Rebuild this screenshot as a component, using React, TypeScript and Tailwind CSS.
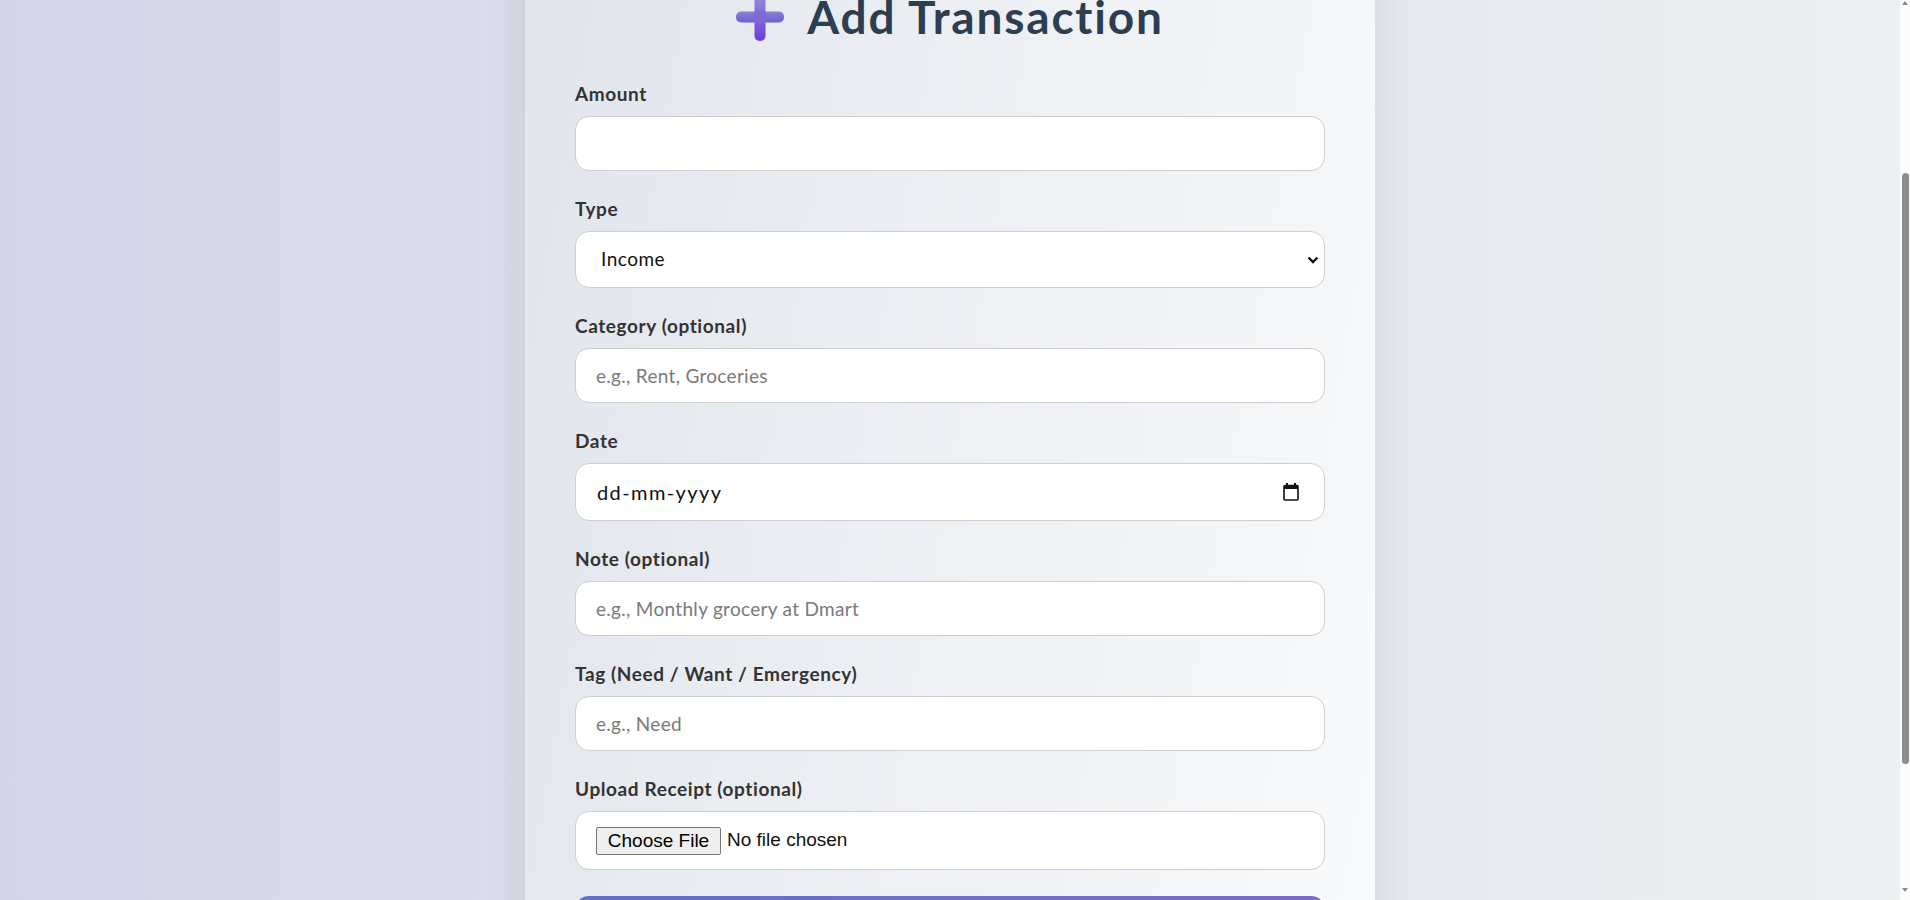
import { useLayoutEffect } from "react";

const font = { fontFamily: "Lato, 'Open Sans', sans-serif" };

function PlusIcon() {
  return (
    <svg width="48" height="48" viewBox="0 0 48 48" className="shrink-0">
      <defs>
        <linearGradient id="plusv" x1="0" y1="0" x2="0" y2="1">
          <stop offset="0" stopColor="#9a8fd9" />
          <stop offset="1" stopColor="#6a3fdc" />
        </linearGradient>
        <linearGradient id="plush" x1="0" y1="0" x2="0" y2="1">
          <stop offset="0" stopColor="#8c80d6" />
          <stop offset="1" stopColor="#6f5ccf" />
        </linearGradient>
      </defs>
      <rect x="18.5" y="0" width="11" height="48" rx="5" fill="url(#plusv)" />
      <rect x="0" y="18.5" width="48" height="11" rx="5" fill="url(#plush)" />
      <rect x="18.5" y="18.5" width="11" height="11" fill="#7a6bd4" />
    </svg>
  );
}

function Label({ children }: { children: React.ReactNode }) {
  return (
    <label className="block mb-[9px] text-[19px] leading-[27px] font-bold tracking-[0.6px] text-[#333]">
      {children}
    </label>
  );
}

const inputCls =
  "w-full h-[55px] rounded-[14px] border border-[#cfcfcf] bg-white px-[20px] text-[19px] tracking-[0.3px] text-[#111] outline-none placeholder:text-[#7a7a7a]";

export default function App() {
  useLayoutEffect(() => {
    window.scrollTo(0, 240);
  }, []);

  return (
    <main
      className="min-h-screen w-full bg-[linear-gradient(to_right,#d5d5e8,#ecf0f1)] pt-[150px] pb-[80px] pr-[10px]"
      style={font}
    >
      <div className="mx-auto w-[850px] rounded-[20px] bg-[linear-gradient(100deg,#e1e5ec,#f9fafb)] px-[50px] pt-[80px] pb-[50px] shadow-[0_10px_40px_rgba(0,0,0,0.09)]">
        {/* Title */}
        <h1 className="flex items-center justify-center gap-[23px] mb-[37px] text-[46px] leading-[53px] font-bold tracking-[1.8px] text-[#2c3e50]">
          <PlusIcon />
          <span>Add Transaction</span>
        </h1>

        <form>
          {/* Amount */}
          <div className="mb-[24px]">
            <Label>Amount</Label>
            <input type="number" className={inputCls} />
          </div>

          {/* Type */}
          <div className="mb-[24px]">
            <Label>Type</Label>
            <div className="relative">
              <select
                className="w-full h-[57px] appearance-none rounded-[14px] border border-[#cfcfcf] bg-white pl-[25px] pr-[30px] text-[19px] tracking-[0.5px] text-[#111] outline-none"
                defaultValue="Income"
                style={font}
              >
                <option>Income</option>
                <option>Expense</option>
              </select>
              <svg
                width="12"
                height="8"
                viewBox="0 0 12 8"
                className="absolute right-[6px] top-[25px] pointer-events-none"
              >
                <polyline points="1.5,1.5 6,6 10.5,1.5" fill="none" stroke="#111" strokeWidth="2.4" />
              </svg>
            </div>
          </div>

          {/* Category */}
          <div className="mb-[24px]">
            <Label>Category (optional)</Label>
            <input type="text" placeholder="e.g., Rent, Groceries" className={inputCls} />
          </div>

          {/* Date */}
          <div className="mb-[24px]">
            <Label>Date</Label>
            <div className="flex h-[58px] w-full items-center justify-between rounded-[14px] border border-[#cfcfcf] bg-white pl-[21px] pr-[25px] text-[20px] tracking-[1.4px] text-[#111]">
              <span>dd-mm-yyyy</span>
              <svg width="16" height="18" viewBox="0 0 16 18">
                <rect x="3" y="0" width="2" height="3" fill="#111" />
                <rect x="11" y="0" width="2" height="3" fill="#111" />
                <rect x="1" y="2.5" width="14" height="14.5" rx="1" fill="none" stroke="#111" strokeWidth="1.6" />
                <rect x="1" y="2.5" width="14" height="3.5" fill="#111" />
              </svg>
            </div>
          </div>

          {/* Note */}
          <div className="mb-[24px]">
            <Label>Note (optional)</Label>
            <input type="text" placeholder="e.g., Monthly grocery at Dmart" className={inputCls} />
          </div>

          {/* Tag */}
          <div className="mb-[24px]">
            <Label>Tag (Need / Want / Emergency)</Label>
            <input type="text" placeholder="e.g., Need" className={inputCls} />
          </div>

          {/* Receipt */}
          <div className="mb-[26px]">
            <Label>Upload Receipt (optional)</Label>
            <div className="flex h-[59px] w-full items-center gap-[6px] rounded-[14px] border border-[#cfcfcf] bg-white pl-[20px] text-[19px] text-[#111] [font-family:'Liberation_Sans',Arial,sans-serif]">
              <button
                type="button"
                className="h-[28px] w-[125px] rounded-[2px] border border-[#767676] bg-[#efefef] text-[19px] leading-[26px] text-black"
              >
                Choose File
              </button>
              <span>No file chosen</span>
            </div>
          </div>

          <button
            type="submit"
            className="w-full h-[56px] rounded-[14px] bg-[linear-gradient(90deg,#6470c8,#7a6bc6)] text-[19px] font-bold text-white"
          >
            Add Transaction
          </button>
        </form>
      </div>

      {/* window scrollbar */}
      <div className="fixed right-0 top-0 h-screen w-[10px] bg-[#fcfcfc]">
        <div className="mx-auto mt-[1px] h-0 w-0 border-x-[3px] border-b-[4px] border-x-transparent border-b-[#8a8a8a]" />
        <div className="absolute right-[1px] top-[173px] h-[591px] w-[7px] rounded-full bg-[#8c8c8c]" />
        <div className="absolute bottom-[8px] left-1/2 -translate-x-1/2 h-0 w-0 border-x-[3px] border-t-[4px] border-x-transparent border-t-[#8a8a8a]" />
      </div>
    </main>
  );
}
